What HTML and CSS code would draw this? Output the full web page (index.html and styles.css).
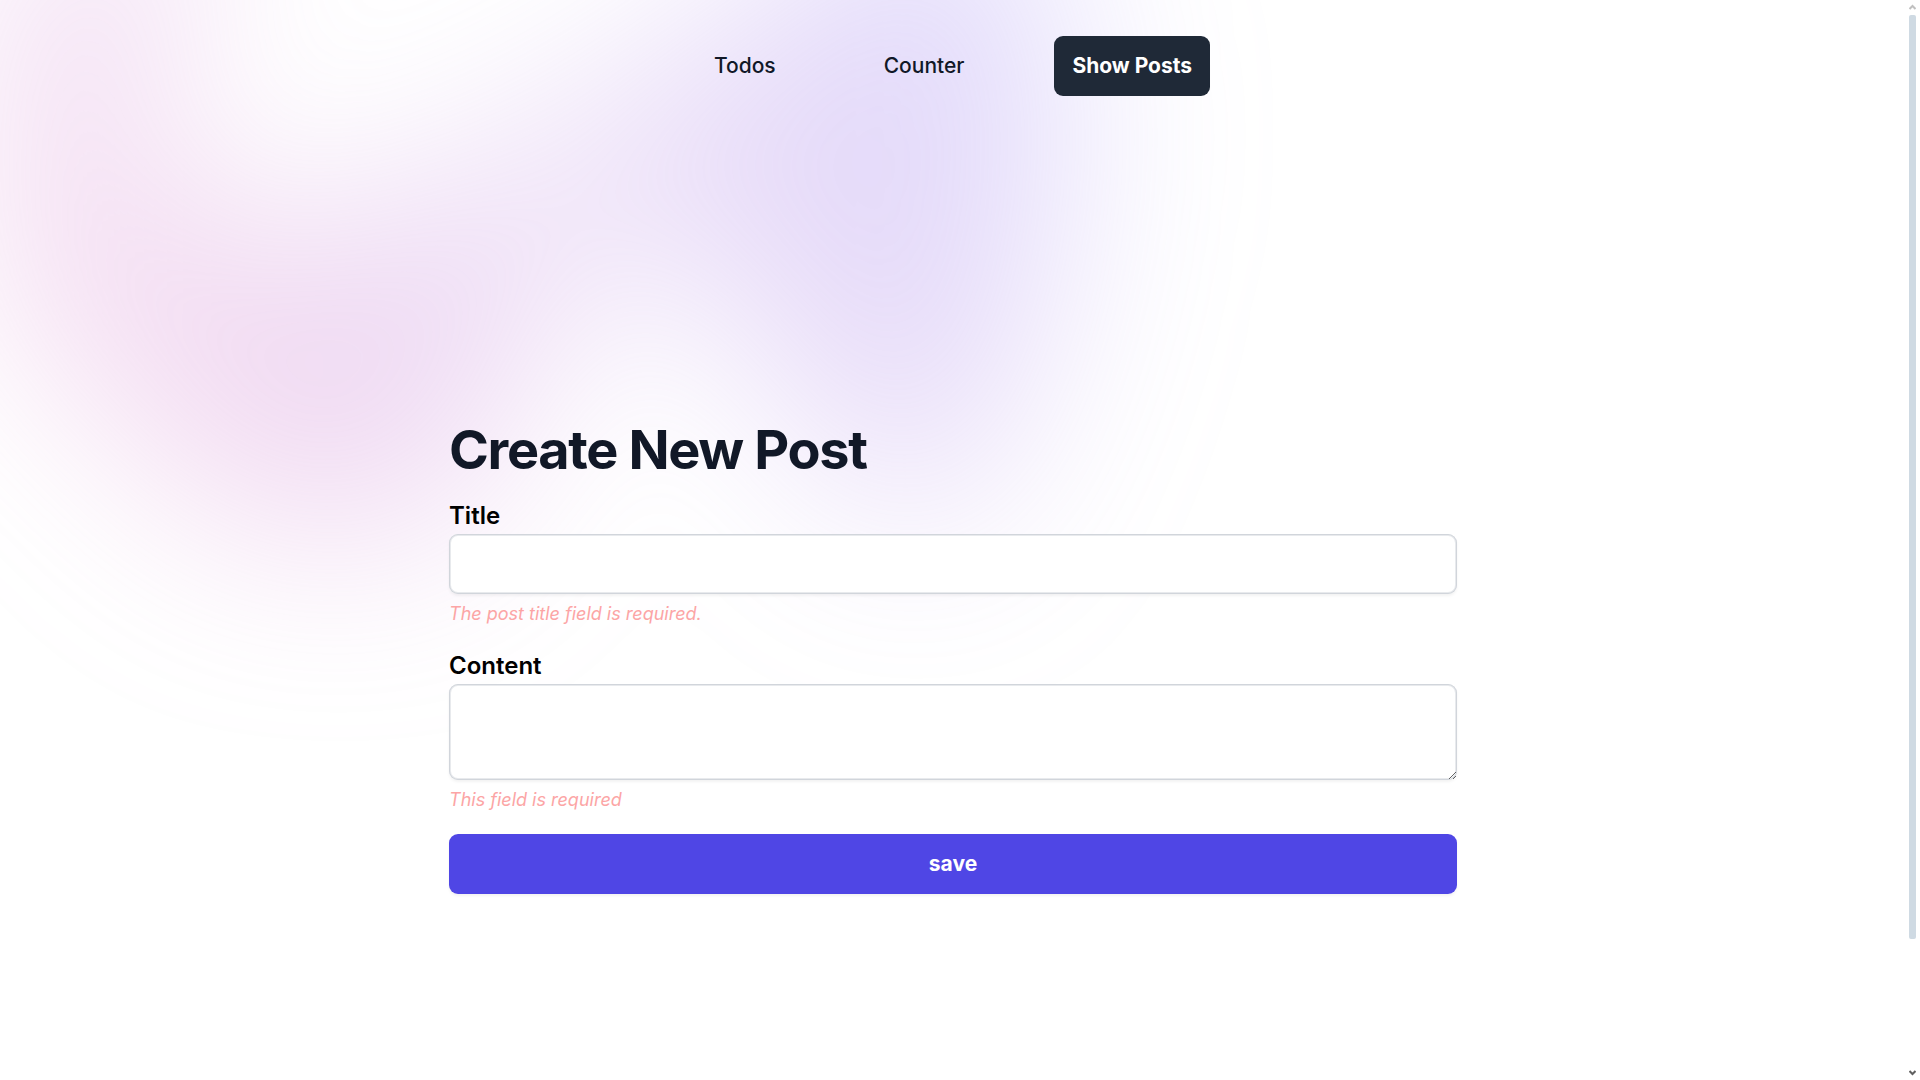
FILE: index.html
```html
<!DOCTYPE html>
<html lang="en">
<head>
<meta charset="utf-8">
<meta name="viewport" content="width=device-width, initial-scale=1">
<title>Create New Post</title>
<link rel="stylesheet" href="styles.css">
</head>
<body>
<div class="page">
  <div class="backdrop" aria-hidden="true">
    <svg class="backdrop-shape" viewBox="0 0 1155 678">
      <path fill="url(#blob)" fill-opacity=".3" d="M317.219 518.975L203.852 678 0 438.341l317.219 80.634 204.172-286.402c1.307 132.337 45.083 346.658 209.733 145.248C936.936 126.058 882.053-94.234 1031.02 41.331c119.18 108.451 130.68 295.337 121.53 375.223L855 299l21.173 362.054-558.954-142.079z"/>
      <defs>
        <linearGradient id="blob" x1="874" x2="281" y1="-165" y2="843" gradientUnits="userSpaceOnUse">
          <stop stop-color="#9089FC"/>
          <stop offset="1" stop-color="#FF80B5"/>
        </linearGradient>
      </defs>
    </svg>
  </div>
  <header class="header">
    <nav class="nav" aria-label="Main">
      <a class="nav-link" href="#todos">Todos</a>
      <a class="nav-link" href="#counter">Counter</a>
      <a class="nav-link nav-link-active" href="#posts">Show Posts</a>
    </nav>
  </header>
  <main class="main">
    <h1 class="heading">Create New Post</h1>
    <form class="form">
      <div class="field">
        <label class="label" for="title">Title</label>
        <input class="control" id="title" type="text" aria-describedby="title-error">
        <p class="error" id="title-error">The post title field is required.</p>
      </div>
      <div class="field">
        <label class="label" for="content">Content</label>
        <textarea class="control control-area" id="content" aria-describedby="content-error"></textarea>
        <p class="error" id="content-error">This field is required</p>
      </div>
      <button class="save" type="button">save</button>
    </form>
  </main>
</div>
<div class="scrollbar" aria-hidden="true">
  <svg class="scroll-arrow scroll-arrow-up" viewBox="0 0 7 6"><path d="M0.500 5 3.500 2 6.500 5"/></svg>
  <div class="scroll-track"><div class="scroll-thumb"></div></div>
  <svg class="scroll-arrow" viewBox="0 0 7 6"><path d="M0.500 1 3.500 4 6.500 1"/></svg>
</div>
</body>
</html>
```
FILE: styles.css
```css
* {
  box-sizing: border-box;
}

body {
  margin: 0;
  background: #fff;
  color: #000;
  font-family: Inter, "Liberation Sans", sans-serif;
  font-size: 24px;
  line-height: 36px;
}

.page {
  position: relative;
  isolation: isolate;
  overflow: hidden;
  min-height: 100vh;
  margin-right: 14px;
}

.backdrop {
  position: absolute;
  z-index: -1;
  top: -480px;
  left: 0;
  right: 0;
  overflow: hidden;
  filter: blur(96px);
}

.backdrop-shape {
  display: block;
  position: relative;
  left: calc(50% - 720px);
  height: 1017px;
  transform: translateX(-50%) rotate(30deg);
}

.header {
  padding: 36px;
}

.nav {
  display: flex;
  justify-content: center;
  gap: 72px;
}

.nav-link {
  padding: 12px 18px;
  border-radius: 9px;
  color: #111827;
  font-size: 21px;
  font-weight: 500;
  text-decoration: none;
}

.nav-link-active {
  background: #1f2937;
  color: #fff;
  font-weight: 700;
}

.main {
  max-width: 1008px;
  margin: 0 auto;
  padding: 288px 0 144px;
}

.heading {
  margin: 0 0 18px;
  color: #111827;
  font-size: 54px;
  font-weight: 700;
  letter-spacing: -0.025em;
  line-height: 60px;
}

.form,
.field {
  display: flex;
  flex-direction: column;
}

.label {
  font-weight: 600;
}

.control {
  width: 100%;
  height: 60px;
  padding: 12px;
  border: 0;
  border-radius: 9px;
  background: #fff;
  box-shadow: inset 0 0 0 1px #d1d5db, inset 0 0 0 2px #e8eaed, 0 2px 3px rgba(0, 0, 0, 0.05);
  font: inherit;
}

.control-area {
  height: 96px;
  resize: vertical;
}

.error {
  margin: 6px 0 21px;
  color: #fca5a5;
  font-size: 18px;
  font-style: italic;
  line-height: 27px;
}

.save {
  height: 60px;
  border: 0;
  border-radius: 9px;
  background: #4f46e5;
  box-shadow: 0 2px 3px rgba(0, 0, 0, 0.05);
  color: #fff;
  font: inherit;
  font-size: 21px;
  font-weight: 700;
}

.scrollbar {
  position: fixed;
  top: 0;
  right: 4px;
  bottom: 0;
  display: flex;
  flex-direction: column;
  width: 7px;
  padding: 4px 0;
}

.scroll-arrow {
  flex: none;
  width: 7px;
  height: 6px;
  fill: none;
  stroke: #606060;
  stroke-width: 2;
}

.scroll-arrow-up {
  stroke: #c0c0c0;
}

.scroll-track {
  flex: 1;
  padding: 5px 0;
}

.scroll-thumb {
  height: 88%;
  border-radius: 2px;
  background: #cfdae3;
}
```
